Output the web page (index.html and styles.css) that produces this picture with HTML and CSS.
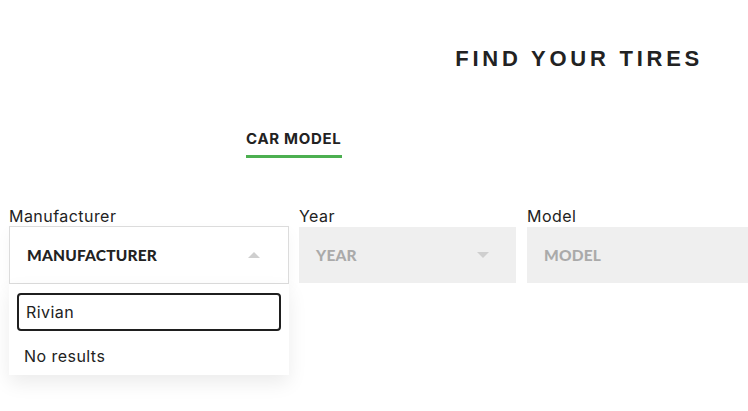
FILE: index.html
```html
<!DOCTYPE html>
<html>
<head>
<meta charset="utf-8">
<link rel="stylesheet" href="styles.css">
</head>
<body>
<div class="page">
  <header class="head">
    <h1 class="title">FIND YOUR TIRES</h1>
  </header>
  <nav class="tabs">
    <div class="tab active">CAR MODEL</div>
  </nav>
  <div class="fields">
    <div class="field f-manu">
      <label class="label">Manufacturer</label>
      <div class="select open">
        <span class="value">MANUFACTURER</span>
        <span class="caret up"></span>
      </div>
      <div class="menu">
        <div class="search">Rivian</div>
        <div class="empty">No results</div>
      </div>
    </div>
    <div class="field f-year">
      <label class="label">Year</label>
      <div class="select disabled">
        <span class="value">YEAR</span>
        <span class="caret down"></span>
      </div>
    </div>
    <div class="field f-model">
      <label class="label">Model</label>
      <div class="select disabled">
        <span class="value">MODEL</span>
      </div>
    </div>
  </div>
</div>
</body>
</html>
```

FILE: styles.css
```css
html, body {
  margin: 0;
  padding: 0;
  background: #fff;
}
body {
  font-family: Inter, "Liberation Sans", sans-serif;
  color: #222;
  width: 748px;
  height: 411px;
  overflow: hidden;
}
.page {
  padding-top: 46px;
}
.head {
  display: flex;
  justify-content: flex-end;
  padding-right: 45px;
}
.title {
  margin: 0;
  font-family: "Liberation Sans", Arial, sans-serif;
  font-weight: 700;
  font-size: 22px;
  line-height: 26px;
  letter-spacing: 3.75px;
  color: #222;
}
.tabs {
  display: flex;
  padding-left: 246px;
  margin-top: 57px;
}
.tab {
  font-family: Inter, sans-serif;
  font-weight: 700;
  font-size: 15px;
  line-height: 20px;
  letter-spacing: 0.7px;
  padding-bottom: 6px;
  border-bottom: 3px solid #4caf50;
  color: #222;
}
.fields {
  display: flex;
  margin-top: 49px;
  padding-left: 9px;
}
.field {
  display: flex;
  flex-direction: column;
  position: relative;
}
.f-manu { width: 280px; margin-right: 10px; }
.f-year { width: 217px; margin-right: 11px; }
.f-model { flex: 1; }
.label {
  font-size: 16px;
  line-height: 18px;
  letter-spacing: 0.45px;
  color: #222;
  padding-bottom: 2px;
}
.select {
  height: 56px;
  display: flex;
  align-items: center;
  padding: 0 17px;
  box-sizing: border-box;
  font-family: Lato, sans-serif;
  font-weight: 900;
  font-size: 15.5px;
  letter-spacing: 0.2px;
}
.f-manu .select {
  height: 58px;
  margin-top: -1px;
  border: 1px solid #dcdcdc;
  background: #fff;
  color: #222;
  box-shadow: 0 6px 14px rgba(0,0,0,0.04);
}
.select.disabled {
  background: #efefef;
  color: #aaa;
  padding-left: 17px;
  margin-top: 0;
}
.value { flex: 1; }
.caret {
  width: 0;
  height: 0;
  border-left: 6px solid transparent;
  border-right: 6px solid transparent;
  margin-right: 11px;
}
.caret.up { border-bottom: 6px solid #cfcfcf; }
.caret.down { border-top: 6px solid #cfcfcf; margin-right: 10px; }
.menu {
  position: absolute;
  top: 77px;
  left: 0;
  width: 280px;
  height: 91px;
  background: #fff;
  box-sizing: border-box;
  padding: 9px 8px 0;
  box-shadow: 0 8px 18px rgba(0,0,0,0.08);
  z-index: 2;
}
.search {
  height: 38px;
  border: 2px solid #1f1f1f;
  border-radius: 4px;
  box-sizing: border-box;
  display: flex;
  align-items: center;
  padding-left: 7px;
  font-size: 16px;
  letter-spacing: 0.45px;
  color: #222;
}
.empty {
  padding-left: 7px;
  margin-top: 16px;
  font-size: 16px;
  letter-spacing: 0.45px;
  line-height: 18px;
  color: #222;
}
```
